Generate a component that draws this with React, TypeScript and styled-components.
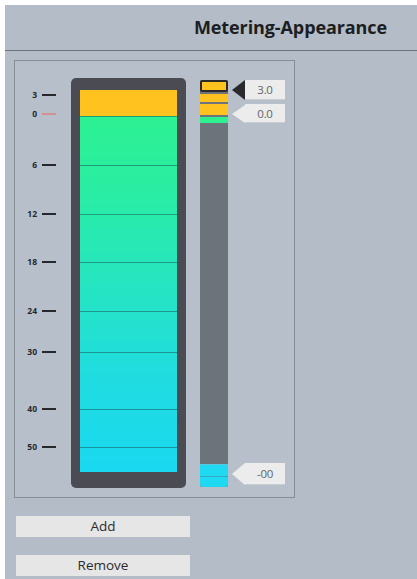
import React from "react";
import styled, { createGlobalStyle } from "styled-components";

const FONT = `"Open Sans", "Noto Sans", "Liberation Sans", sans-serif`;
const BG = "#b3bcc7";
const METER_TOP = 78;
const FILL_TOP = 90;
const FILL_BOTTOM = 472;

const GlobalStyle = createGlobalStyle`
	html, body {
		margin: 0;
		padding: 0;
		background: #ffffff;
	}
	* {
		box-sizing: border-box;
	}
`;

const Page = styled.div`
	width: 417px;
	height: 579px;
	padding: 5px 0 0 5px;
	background: #ffffff;
	font-family: ${FONT};
	overflow: hidden;
`;

const Window = styled.div`
	width: 412px;
	height: 574px;
	background: ${BG};
	display: flex;
	flex-direction: column;
`;

const Header = styled.div`
	height: 46px;
	border-bottom: 1px solid #6c737c;
	display: flex;
	justify-content: flex-end;
	align-items: center;
	padding: 0 30px 2px 0;
`;

const Title = styled.div`
	font-size: 18px;
	font-weight: 700;
	color: #1c1e22;
	letter-spacing: -0.1px;
`;

const Body = styled.div`
	padding: 9px 0 0 9px;
	display: flex;
	flex-direction: column;
`;

const Panel = styled.div`
	width: 281px;
	height: 438px;
	border: 1px solid #858d97;
	background: #b7c0ca;
	display: flex;
	align-items: flex-start;
	padding-top: 17px;
`;

const Scale = styled.div`
	position: relative;
	width: 56px;
	height: 410px;
	flex-shrink: 0;
`;

const Tick = styled.div<{ $top: number }>`
	position: absolute;
	top: ${(p) => p.$top - 5}px;
	left: 0;
	width: 41px;
	height: 10px;
	display: flex;
	align-items: center;
	justify-content: flex-end;
	gap: 5px;
`;

const TickLabel = styled.span`
	font-size: 8.5px;
	font-weight: 700;
	color: #26282c;
	line-height: 10px;
`;

const TickDash = styled.span<{ $red?: boolean }>`
	width: 14px;
	height: 2px;
	background: ${(p) => (p.$red ? "#d48f93" : "#26282c")};
`;

const MeterFrame = styled.div`
	width: 115px;
	height: 410px;
	background: #4b4c53;
	border-radius: 5px;
	padding: 12px 9px 16px 9px;
	flex-shrink: 0;
`;

const Fill = styled.div`
	height: 100%;
	display: flex;
	flex-direction: column;
	background: linear-gradient(
		180deg,
		#2ef28c 0%,
		#2aeda2 25%,
		#26e5c0 50%,
		#20dce0 75%,
		#1ad8f0 100%
	);
`;

const Segment = styled.div<{ $h: number; $yellow?: boolean; $first?: boolean }>`
	height: ${(p) => p.$h}px;
	flex-shrink: 0;
	background: ${(p) => (p.$yellow ? "#ffc21e" : "transparent")};
	border-top: ${(p) => (p.$first ? "none" : "1px solid rgba(20, 90, 90, 0.55)")};
`;

const PeakBar = styled.div`
	margin: 2px 0 0 14px;
	width: 28px;
	height: 407px;
	background: #6d737b;
	border-radius: 2px;
	display: flex;
	flex-direction: column;
	justify-content: space-between;
	flex-shrink: 0;
`;

const PeakTop = styled.div`
	display: flex;
	flex-direction: column;
	gap: 2px;
`;

const Led = styled.div<{ $h: number; $color: string; $held?: boolean }>`
	height: ${(p) => p.$h}px;
	background: ${(p) => p.$color};
	border: ${(p) => (p.$held ? "2px solid #2a2a2a" : "none")};
	border-radius: ${(p) => (p.$held ? "2px" : "0")};
`;

const PeakBottom = styled.div`
	height: 23px;
	background: #1fd8f2;
	border-radius: 0 0 3px 3px;
	border-top: 1px solid #5cc6da;
	display: flex;
	flex-direction: column;
	justify-content: center;
`;

const PeakLine = styled.div`
	height: 1px;
	background: #3aa7c0;
`;

const Tags = styled.div`
	position: relative;
	width: 60px;
	height: 410px;
	margin-left: 4px;
	flex-shrink: 0;
`;

const Tag = styled.div<{ $top: number; $h: number }>`
	position: absolute;
	top: ${(p) => p.$top}px;
	left: 0;
	height: ${(p) => p.$h}px;
	display: flex;
	align-items: center;
`;

const Pointer = styled.div<{ $dark?: boolean; $h: number }>`
	width: 0;
	height: 0;
	border-top: ${(p) => p.$h / 2}px solid transparent;
	border-bottom: ${(p) => p.$h / 2}px solid transparent;
	border-right: 13px solid ${(p) => (p.$dark ? "#2a2a2e" : "#ececec")};
`;

const TagBox = styled.div`
	width: 40px;
	height: 100%;
	background: #ececec;
	border-bottom: 1px solid #c9ccd0;
	display: flex;
	align-items: center;
	justify-content: center;
	font-size: 11.5px;
	color: #626569;
	letter-spacing: -0.3px;
`;

const Buttons = styled.div`
	display: flex;
	flex-direction: column;
	gap: 18px;
	margin: 18px 0 0 2px;
`;

const Button = styled.button`
	width: 174px;
	height: 21px;
	border: none;
	background: #e6e6e6;
	font-family: ${FONT};
	font-size: 13.5px;
	color: #2a2b2e;
	padding: 0;
	line-height: 21px;
	cursor: pointer;
`;

const ticks = [
	{ label: "3", y: 95 },
	{ label: "0", y: 114, red: true },
	{ label: "6", y: 165 },
	{ label: "12", y: 214 },
	{ label: "18", y: 262 },
	{ label: "24", y: 311 },
	{ label: "30", y: 352 },
	{ label: "40", y: 409 },
	{ label: "50", y: 447 },
];

// boundaries inside the fill, page y
const bounds = [FILL_TOP, 116, 165, 214, 262, 311, 352, 409, 447, FILL_BOTTOM];

const tags = [
	{ text: "3.0", y: 80, h: 20, dark: true },
	{ text: "0.0", y: 104, h: 19 },
	{ text: "-00", y: 463, h: 22 },
];

export default function App() {
	return (
		<Page>
			<GlobalStyle />
			<Window>
				<Header>
					<Title>Metering-Appearance</Title>
				</Header>
				<Body>
					<Panel>
						<Scale>
							{ticks.map((t) => (
								<Tick key={t.label} $top={t.y - METER_TOP}>
									<TickLabel>{t.label}</TickLabel>
									<TickDash $red={t.red} />
								</Tick>
							))}
						</Scale>
						<MeterFrame>
							<Fill>
								{bounds.slice(1).map((b, i) => (
									<Segment
										key={b}
										$h={b - bounds[i]}
										$yellow={i === 0}
										$first={i === 0}
									/>
								))}
							</Fill>
						</MeterFrame>
						<PeakBar>
							<PeakTop>
								<Led $h={12} $color="#ffc21e" $held />
								<Led $h={8} $color="#ffc21e" />
								<Led $h={11} $color="#ffc21e" />
								<Led $h={6} $color="#2ef08e" />
							</PeakTop>
							<PeakBottom>
								<PeakLine />
							</PeakBottom>
						</PeakBar>
						<Tags>
							{tags.map((t) => (
								<Tag key={t.text} $top={t.y - METER_TOP} $h={t.h}>
									<Pointer $dark={t.dark} $h={t.h} />
									<TagBox>{t.text}</TagBox>
								</Tag>
							))}
						</Tags>
					</Panel>
					<Buttons>
						<Button>Add</Button>
						<Button>Remove</Button>
					</Buttons>
				</Body>
			</Window>
		</Page>
	);
}
